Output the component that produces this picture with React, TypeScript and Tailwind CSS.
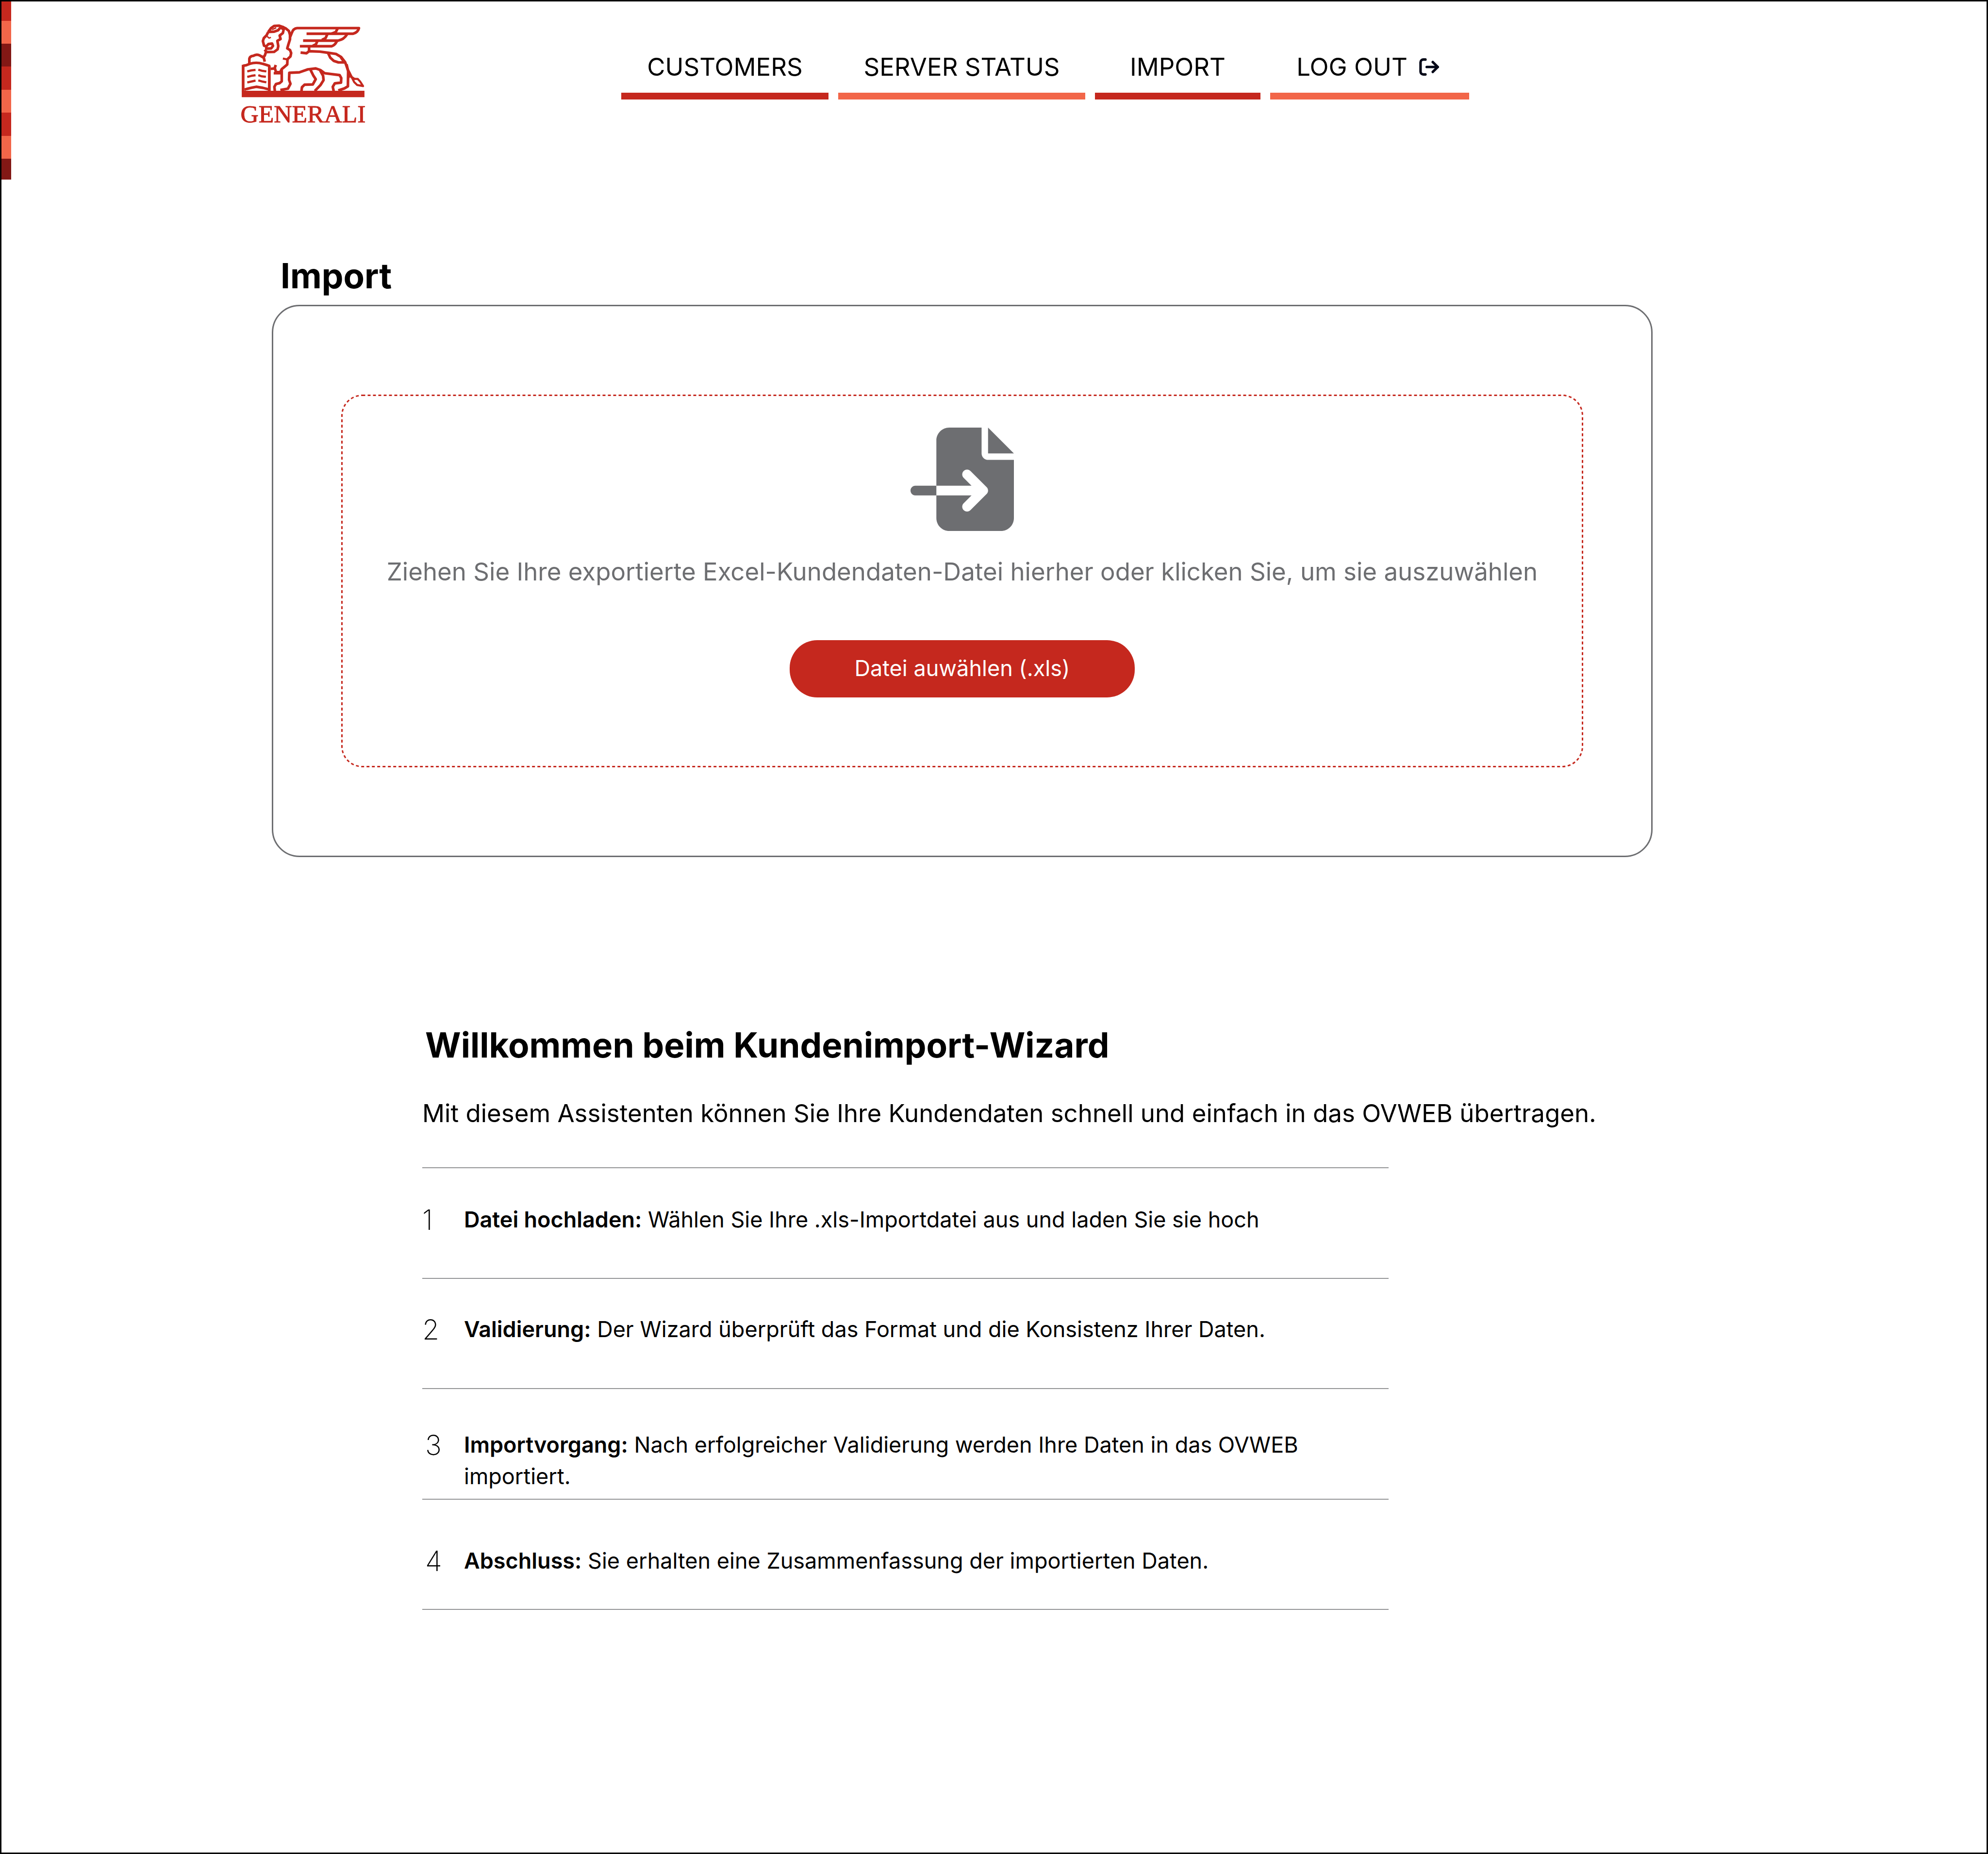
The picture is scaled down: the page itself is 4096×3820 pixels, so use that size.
import { FaFileImport } from "react-icons/fa6";

const stripes = [
  "h-[40px] bg-[#c5281e]",
  "h-[47px] bg-[#f26649]",
  "h-[47px] bg-[#821815]",
  "h-[48px] bg-[#c5281e]",
  "h-[47px] bg-[#f26649]",
  "h-[48px] bg-[#c5281e]",
  "h-[47px] bg-[#f26649]",
  "h-[43px] bg-[#821815]",
];

const links = [
  { label: "CUSTOMERS", box: "w-[427px] border-[#c5281e]" },
  { label: "SERVER STATUS", box: "w-[509px] border-[#f26649]" },
  { label: "IMPORT", box: "w-[341px] border-[#c5281e]" },
  { label: "LOG OUT", box: "w-[410px] border-[#f26649] pr-[8px]", icon: true },
];

const steps = [
  {
    title: "Datei hochladen:",
    text: "Wählen Sie Ihre .xls-Importdatei aus und laden Sie sie hoch",
    row: "pt-[73px]",
    digit: "",
  },
  {
    title: "Validierung:",
    text: "Der Wizard überprüft das Format und die Konsistenz Ihrer Daten.",
    row: "pt-[71px]",
    digit: "",
  },
  {
    title: "Importvorgang:",
    text: "Nach erfolgreicher Validierung werden Ihre Daten in das OVWEB importiert.",
    row: "pt-[82px]",
    digit: "pl-[6px]",
  },
  {
    title: "Abschluss:",
    text: "Sie erhalten eine Zusammenfassung der importierten Daten.",
    row: "pt-[93px]",
    digit: "pl-[6px]",
  },
];

function Logo() {
  return (
    <svg
      role="img"
      aria-label="Generali"
      viewBox="120 96 1068 866"
      className="h-[205px] w-[253px] shrink-0 overflow-visible"
      fill="none"
      stroke="#c5281e"
      strokeWidth="23"
      strokeLinejoin="round"
    >
      {/* book */}
      <path d="M132 444V680M360 452V680" strokeWidth="24" />
      <path d="M132 453L160 448L190 436Q246 418 302 436L336 446L366 456M144 660Q200 644 246 636Q300 642 360 660" />
      <path
        d="M168 502L204 493L240 489M264 487L294 496L334 502M168 550L204 541L240 535M264 535L294 545L330 549M168 598L204 590L240 582M264 580L294 589L334 597"
        strokeWidth="19"
      />
      {/* paw and chin */}
      <path d="M186 436V392Q190 368 222 366Q250 348 278 364L312 384L320 418M302 378L320 366L332 330" />
      {/* face */}
      <path d="M350 160L336 188L312 212L304 238L314 278L334 284L352 264L384 260L392 280L376 302L322 304M318 314L340 334L402 332L432 310L438 282L430 236L458 220L450 190L478 168L484 140L462 118" />
      <path d="M350 160L376 124L402 106L444 104L474 114L506 130L530 150L540 184" />
      <path d="M350 158L402 156L436 144L456 122" />
      <path d="M342 198L358 212L374 206M384 138L420 122" strokeWidth="12" />
      <path d="M450 112L482 108L504 132L482 140Z" fill="#c5281e" strokeWidth="6" />
      {/* mane */}
      <path d="M540 184L540 222L524 274L516 302L540 316L550 342L544 372L518 396L516 442L490 464L468 482L456 506" />
      <path d="M478 390L518 398" strokeWidth="18" />
      <path d="M372 480L406 476L416 446M408 474L418 508L458 510M398 518H462" />
      {/* front legs */}
      <path d="M468 490V588L450 604L418 612L404 636L408 672M456 664L522 652L544 610L532 576L534 514L622 510L696 484L764 476L804 490L842 518L972 534L986 560L984 600L930 606L912 636L920 672" />
      {/* hind legs */}
      <path d="M718 488L742 536L764 570L738 616L666 618L644 640L640 672M802 494L828 540L832 578L806 620L756 672M1032 440L1046 500L1044 632L1014 650L960 668" />
      {/* wing */}
      <path d="M542 200L556 166Q568 128 602 125H1140Q1132 162 1090 174H684M1036 180Q1010 224 960 234H654M948 240Q930 276 902 283H626" />
      <path d="M954 130L938 160L900 174M864 180L850 212L818 228M778 238L766 266L738 280M706 283V328" />
      {/* back and tail */}
      <path d="M632 338L684 344L706 326L800 330L872 340L940 350L984 376L1020 422L1044 490L1076 552L1104 572" />
      <path d="M872 344L890 382L920 410L962 424L1018 424M982 378L1006 414" />
      <path d="M1040 480L1064 520L1052 560" strokeWidth="14" />
      <path d="M1084 566L1130 568L1150 590L1176 630L1124 620L1098 594Z" strokeWidth="18" />
      <path d="M120 698H1188" strokeWidth="56" />
      <text
        x="654"
        y="945"
        textAnchor="middle"
        fill="#c5281e"
        strokeWidth="4"
        className="font-['Liberation_Serif',serif] text-[218px]"
      >
        GENERALI
      </text>
    </svg>
  );
}

function LogOutIcon() {
  return (
    <svg
      aria-hidden="true"
      viewBox="58 55 174 152"
      className="h-[36px] w-[41px]"
      fill="none"
      stroke="#020617"
      strokeWidth="22"
      strokeLinecap="round"
      strokeLinejoin="round"
    >
      <path d="M113 66H95a25 25 0 0 0-25 25V171a25 25 0 0 0 25 25H113M124 131H221M177 88L221 131L177 174" />
    </svg>
  );
}

function DashedOutline() {
  return (
    <svg
      aria-hidden="true"
      className="pointer-events-none absolute top-0 left-0 h-[calc(100%-3px)] w-[calc(100%-3px)] overflow-visible"
    >
      <rect
        x="1.5"
        y="1.5"
        width="100%"
        height="100%"
        rx="42"
        fill="none"
        stroke="#c5281e"
        strokeWidth="3"
        strokeDasharray="6 5"
      />
    </svg>
  );
}

export default function App() {
  return (
    <div className="flex min-h-screen items-start border-[3px] border-black bg-white font-['Inter',sans-serif] text-black">
      <div aria-hidden="true" className="w-[20px] shrink-0">
        {stripes.map((stripe, i) => (
          <div key={i} className={stripe} />
        ))}
      </div>

      <div className="min-w-0 flex-1">
        <header className="flex items-start gap-[529px] pt-[48px] pl-[475px]">
          <Logo />
          <nav className="mt-[56px] flex gap-[20px] text-[51px] leading-[62px]">
            {links.map(({ label, box, icon }) => (
              <a
                key={label}
                href="#"
                className={`flex items-center justify-center gap-[24px] border-b-[14px] pb-[22px] whitespace-nowrap ${box}`}
              >
                {label}
                {icon && <LogOutIcon />}
              </a>
            ))}
          </nav>
        </header>

        <main>
          <section className="mt-[269px] ml-[537px] max-w-[2845px]">
            <h1 className="pl-[18px] text-[71px] leading-[86px] font-bold">Import</h1>
            <div className="mt-[17px] rounded-[57px] border-[3px] border-[#6d6e71] px-[140px] py-[182px]">
              <div className="relative flex flex-col items-center pt-[68px] pb-[144px]">
                <DashedOutline />
                <FaFileImport aria-hidden="true" className="h-[213px] w-[213px] text-[#6d6e71]" />
                <p className="mt-[53px] text-[51px] leading-[62px] whitespace-nowrap text-[#6d6e71]">
                  Ziehen Sie Ihre exportierte Excel-Kundendaten-Datei hierher oder klicken Sie, um sie auszuwählen
                </p>
                <button
                  type="button"
                  className="mt-[110px] h-[118px] w-[711px] rounded-[57px] bg-[#c5281e] pb-[2px] text-[45px] leading-[56px] text-white"
                >
                  Datei auwählen (.xls)
                </button>
              </div>
            </div>
          </section>

          <section className="mt-[344px] ml-[847px]">
            <h2 className="pl-[6px] text-[71px] leading-[86px] font-bold">Willkommen beim Kundenimport-Wizard</h2>
            <p className="mt-[67px] text-[51px] leading-[62px]">
              Mit diesem Assistenten können Sie Ihre Kundendaten schnell und einfach in das OVWEB übertragen.
            </p>
            <ol className="mt-[80px] grid h-[912px] max-w-[1991px] grid-rows-4 border-t-2 border-[#949597]">
              {steps.map(({ title, text, row, digit }, i) => (
                <li key={title} className={`flex items-start border-b-2 border-[#949597] ${row}`}>
                  <span className={`w-[86px] shrink-0 text-[57px] leading-[67px] font-extralight ${digit}`}>
                    {i + 1}
                  </span>
                  <p className="flex-1 text-[45px] leading-[65px]">
                    <strong className="font-semibold">{title}</strong> {text}
                  </p>
                </li>
              ))}
            </ol>
          </section>
        </main>
      </div>
    </div>
  );
}
